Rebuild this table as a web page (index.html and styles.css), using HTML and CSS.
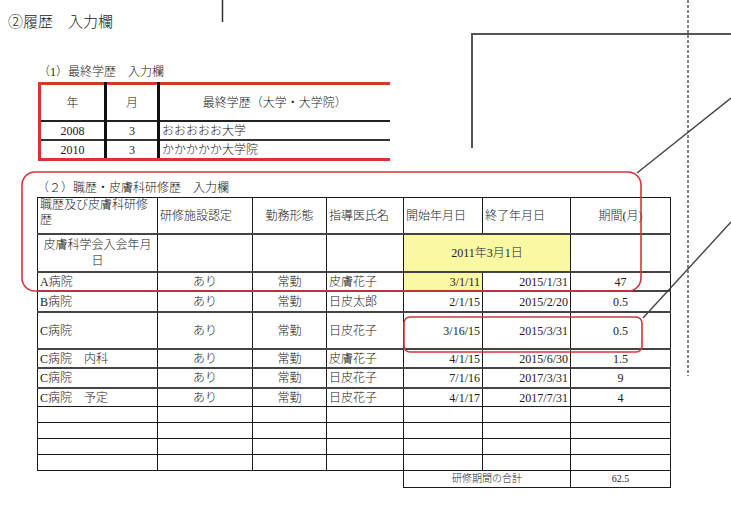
FILE: index.html
```html
<!DOCTYPE html>
<html lang="ja">
<head>
<meta charset="utf-8">
<title>履歴 入力欄</title>
<link rel="stylesheet" href="styles.css">
</head>
<body>
<div class="page">
  <h1 class="title">②履歴　入力欄</h1>

  <section class="sec1">
    <p class="label">（1）最終学歴　入力欄</p>
    <table class="t1">
      <colgroup><col class="w66"><col class="w53"><col class="w231"></colgroup>
      <tr class="h"><td class="sep">年</td><td class="sep">月</td><td>最終学歴（大学・大学院）</td></tr>
      <tr class="r"><td class="sep">2008</td><td class="sep">3</td><td class="l">おおおおお大学</td></tr>
      <tr class="r last"><td class="sep">2010</td><td class="sep">3</td><td class="l">かかかかか大学院</td></tr>
    </table>
  </section>

  <section class="sec2">
    <p class="label">（２）職歴・皮膚科研修歴　入力欄</p>
    <table class="t2">
      <colgroup>
        <col class="a"><col class="b"><col class="c"><col class="d"><col class="e"><col class="f"><col class="g">
      </colgroup>
      <tr class="hd">
        <td class="l top">職歴及び皮膚科研修歴</td>
        <td class="l">研修施設認定</td>
        <td>勤務形態</td>
        <td class="l">指導医氏名</td>
        <td class="l">開始年月日</td>
        <td class="l">終了年月日</td>
        <td>期間(月)</td>
      </tr>
      <tr class="hd2 thick">
        <td class="wrap">皮膚科学会入会年月日</td>
        <td></td><td></td><td></td>
        <td class="yellow" colspan="2">2011年3月1日</td>
        <td></td>
      </tr>
      <tr class="r19 thick">
        <td class="l">A病院</td><td>あり</td><td>常勤</td><td class="l">皮膚花子</td>
        <td class="rt yellow">3/1/11</td><td class="rt">2015/1/31</td><td>47</td>
      </tr>
      <tr class="r21 thick">
        <td class="l">B病院</td><td>あり</td><td>常勤</td><td class="l">日皮太郎</td>
        <td class="rt">2/1/15</td><td class="rt">2015/2/20</td><td>0.5</td>
      </tr>
      <tr class="r37 thick">
        <td class="l">C病院</td><td>あり</td><td>常勤</td><td class="l">日皮花子</td>
        <td class="rt">3/16/15</td><td class="rt">2015/3/31</td><td>0.5</td>
      </tr>
      <tr class="r19 thick">
        <td class="l">C病院　内科</td><td>あり</td><td>常勤</td><td class="l">皮膚花子</td>
        <td class="rt">4/1/15</td><td class="rt">2015/6/30</td><td>1.5</td>
      </tr>
      <tr class="r20 thick">
        <td class="l">C病院</td><td>あり</td><td>常勤</td><td class="l">日皮花子</td>
        <td class="rt">7/1/16</td><td class="rt">2017/3/31</td><td>9</td>
      </tr>
      <tr class="r19 thick">
        <td class="l">C病院　予定</td><td>あり</td><td>常勤</td><td class="l">日皮花子</td>
        <td class="rt">4/1/17</td><td class="rt">2017/7/31</td><td>4</td>
      </tr>
      <tr class="r16"><td></td><td></td><td></td><td></td><td></td><td></td><td></td></tr>
      <tr class="r16"><td></td><td></td><td></td><td></td><td></td><td></td><td></td></tr>
      <tr class="r16"><td></td><td></td><td></td><td></td><td></td><td></td><td></td></tr>
      <tr class="r16"><td></td><td></td><td></td><td></td><td></td><td></td><td></td></tr>
      <tr class="sum">
        <td class="blank"></td><td class="blank"></td><td class="blank"></td><td class="blank"></td>
        <td colspan="2">研修期間の合計</td><td>62.5</td>
      </tr>
    </table>
  </section>

  <svg class="overlay" width="731" height="516" viewBox="0 0 731 516" aria-hidden="true">
    <line x1="222.5" y1="0" x2="222.5" y2="22" stroke="#333" stroke-width="1.5"/>
    <path d="M472 148 V34 H731" fill="none" stroke="#555" stroke-width="2"/>
    <line x1="688" y1="0" x2="688" y2="376" stroke="#666" stroke-width="1.6" stroke-dasharray="3 2"/>
    <line x1="637" y1="173" x2="731" y2="98" stroke="#444" stroke-width="1.4"/>
    <line x1="643" y1="318" x2="731" y2="222" stroke="#444" stroke-width="1.4"/>
    <rect x="22" y="172" width="619" height="119" rx="13" fill="none" stroke="#d8333a" stroke-width="1.6"/>
    <rect x="404" y="317" width="238" height="35" rx="6" fill="none" stroke="#d8333a" stroke-width="1.6"/>
  </svg>
</div>
</body>
</html>
```

FILE: styles.css
```css
html, body {
  margin: 0;
  padding: 0;
  background: #fff;
}
body {
  font-family: "Liberation Serif", "Noto Sans CJK JP", serif;
  color: #222;
}
.page {
  position: relative;
  width: 731px;
  height: 516px;
  overflow: hidden;
}
.title {
  margin: 0;
  padding: 12px 0 0 8px;
  font-size: 15px;
  font-weight: 300;
  line-height: 20px;
  height: 20px;
}
.label {
  margin: 0;
  font-size: 12px;
  font-weight: 300;
  line-height: 16px;
  height: 16px;
}
.sec1 {
  margin-top: 32px;
  padding-left: 38px;
}
.sec1 .label {
  margin-bottom: 2px;
}
.t1 {
  border-collapse: collapse;
  table-layout: fixed;
  width: 350px;
  border-top: 3px solid #d8352c;
  border-bottom: 3px solid #d8352c;
  border-left: 3px solid #d8352c;
  font-size: 12px;
  font-weight: 300;
}
.w66 { width: 66px; }
.w53 { width: 53px; }
.w231 { width: 231px; }
.t1 td {
  padding: 0 2px;
  text-align: center;
  line-height: 14px;
}
.t1 td.sep {
  border-right: 3px solid #111;
}
.t1 td.l {
  text-align: left;
}
.t1 .h td {
  height: 35px;
  border-bottom: 2px solid #222;
}
.t1 .r td {
  height: 17px;
  border-bottom: 2px solid #333;
}
.t1 .r.last td {
  border-bottom: 3px solid #d8352c;
}

.sec2 {
  margin-top: 19px;
  padding-left: 37px;
}
.sec2 .label {
  margin-bottom: 1px;
}
.t2 {
  border-collapse: collapse;
  table-layout: fixed;
  width: 633px;
  font-size: 12px;
  font-weight: 300;
}
.t2 .a { width: 120px; }
.t2 .b { width: 95px; }
.t2 .c { width: 74px; }
.t2 .d { width: 77px; }
.t2 .e { width: 79px; }
.t2 .f { width: 88px; }
.t2 .g { width: 100px; }
.t2 td {
  border: 1px solid #1a1a1a;
  padding: 0 2px;
  text-align: center;
  line-height: 14px;
  white-space: nowrap;
  overflow: visible;
}
.t2 td.l { text-align: left; }
.t2 td.rt { text-align: right; }
.t2 .hd td.top {
  white-space: normal;
  vertical-align: top;
  line-height: 15px;
  padding-top: 0;
}
.t2 td.wrap {
  white-space: normal;
  line-height: 16px;
}
.t2 .hd td { height: 35px; }
.t2 .hd2 td { height: 36px; }
.t2 tr.thick td { border-top: 2px solid #444; }
.t2 .r19 td { height: 17px; }
.t2 .r20 td { height: 18px; }
.t2 .r21 td { height: 19px; }
.t2 .r37 td { height: 35px; }
.t2 .r16 td { height: 15px; }
.t2 .sum td {
  height: 16px;
  font-size: 10px;
}
.t2 .sum td.blank {
  border-left: none;
  border-right: none;
  border-bottom: none;
}
.t2 td.yellow {
  background: #faf8a2;
}
.overlay {
  position: absolute;
  left: 0;
  top: 0;
  pointer-events: none;
}
```
